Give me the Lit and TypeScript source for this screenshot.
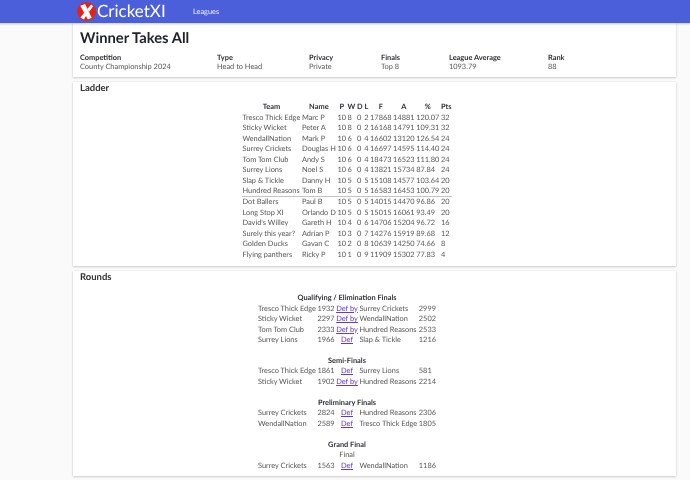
import { LitElement, html, css } from "lit";
import { customElement } from "lit/decorators.js";

const ladder = [
  ["Tresco Thick Edge","Marc P","10","8","0","2","17868","14881","120.07","32"],
  ["Sticky Wicket","Peter A","10","8","0","2","16168","14791","109.31","32"],
  ["WendallNation","Mark P","10","6","0","4","16602","13120","126.54","24"],
  ["Surrey Crickets","Douglas H","10","6","0","4","16697","14595","114.40","24"],
  ["Tom Tom Club","Andy S","10","6","0","4","18473","16523","111.80","24"],
  ["Surrey Lions","Noel S","10","6","0","4","13821","15734","87.84","24"],
  ["Slap & Tickle","Danny H","10","5","0","5","15108","14577","103.64","20"],
  ["Hundred Reasons","Tom B","10","5","0","5","16583","16453","100.79","20"],
  ["Dot Ballers","Paul B","10","5","0","5","14015","14470","96.86","20"],
  ["Long Stop XI","Orlando D","10","5","0","5","15015","16061","93.49","20"],
  ["David's Willey","Gareth H","10","4","0","6","14706","15204","96.72","16"],
  ["Surely this year?","Adrian P","10","3","0","7","14276","15919","89.68","12"],
  ["Golden Ducks","Gavan C","10","2","0","8","10639","14250","74.66","8"],
  ["Flying panthers","Ricky P","10","1","0","9","11909","15302","77.83","4"],
];
const heads = ["Team","Name","P","W","D","L","F","A","%","Pts"];
type G = [string, string, string, string, string];
const rounds: { title: string; sub?: string; games: G[] }[] = [
  { title: "Qualifying / Elimination Finals", games: [
    ["Tresco Thick Edge","1932","Def by","Surrey Crickets","2999"],
    ["Sticky Wicket","2297","Def by","WendallNation","2502"],
    ["Tom Tom Club","2333","Def by","Hundred Reasons","2533"],
    ["Surrey Lions","1966","Def","Slap & Tickle","1216"],
  ]},
  { title: "Semi-Finals", games: [
    ["Tresco Thick Edge","1861","Def","Surrey Lions","581"],
    ["Sticky Wicket","1902","Def by","Hundred Reasons","2214"],
  ]},
  { title: "Preliminary Finals", games: [
    ["Surrey Crickets","2824","Def","Hundred Reasons","2306"],
    ["WendallNation","2589","Def","Tresco Thick Edge","1805"],
  ]},
  { title: "Grand Final", sub: "Final", games: [
    ["Surrey Crickets","1563","Def","WendallNation","1186"],
  ]},
];
const meta = [
  ["Competition","County Championship 2024"],
  ["Type","Head to Head"],
  ["Privacy","Private"],
  ["Finals","Top 8"],
  ["League Average","1093.79"],
  ["Rank","88"],
];

@customElement("app-root")
export class AppRoot extends LitElement {
  static styles = css`
    :host { display: block; height: 480px; overflow: hidden; background: #fafafa; font-family: Lato, "Liberation Sans", sans-serif; font-size: 7.4px; line-height: 10.54px; color: #555; text-rendering: geometricPrecision; }
    .page { height: 480px; filter: blur(0.3px); margin: 0 -2px; padding: 0 2px; }
    .nav { height: 23px; margin: 0 -2px; background: #4c5fdb; display: flex; align-items: center; padding-left: 79px; color: #fff; box-shadow: 0 1px 2px rgba(34,36,38,.25); position: relative; }
    .logo { display: flex; align-items: center; gap: 1px; width: 116px; font-size: 17px; color: #fff; }
    .logo svg { width: 19px; height: 19px; flex: none; }
    .nav a { font-size: 7.4px; color: #eef0fc; padding-top: 1px; }
    .card { background: #fff; width: 603px; margin: 0 0 5px 73px; box-shadow: 0 1px 2px rgba(34,36,38,.18), 0 0 1px rgba(34,36,38,.2); box-sizing: border-box; padding: 0 7px; }
    .inner { width: 534px; }
    .head { height: 53.5px; padding-top: 5.5px; }
    h1 { margin: 0; font-size: 14.75px; line-height: 18px; font-weight: 700; color: #1f2229; }
    h2 { margin: 0; font-size: 9.5px; line-height: 12px; font-weight: 700; color: #333; }
    .meta { display: grid; grid-template-columns: 137px 92px 72px 68px 99px 1fr; margin-top: 6.5px; line-height: 9.4px; }
    .meta b { display: block; font-weight: 700; color: #2c2f36; }
    .ladder { height: 184.5px; padding-top: 1.2px; }
    table { border-collapse: collapse; margin: 0 auto; }
    td, th { padding: 0 0.8px; white-space: nowrap; text-align: left; font-weight: 400; }
    th { font-weight: 700; color: #2c2f36; text-align: center; }
    .lt { margin-top: 7.4px; }
    .cut td { box-shadow: inset 0 -1px #c4c4c4; }
    .rounds { height: 205px; padding-top: 1px; overflow: hidden; }
    .rt { margin-top: 9px; }
    .rt th { text-align: center; }
    .rt td.sub { text-align: center; }
    .gap td { height: 10.2px; }
    a.link { color: #6435d9; text-decoration: underline; }
    td.lc { text-align: center; }
  `;
  render() {
    return html`
      <div class="page">
      <div class="nav">
        <div class="logo">
          <svg viewBox="0 0 20 20"><circle cx="10" cy="10" r="10" fill="#e2231a"/><path d="M3.5 4 L8.5 2 L15.5 16.5 L11.5 18.5 Z" fill="#fff"/><path d="M15 2.5 L17 4.5 L12.6 10.6 L11 7.2 Z M8 10.5 L9.8 14.2 L7.4 18.4 L3.6 16.2 Z" fill="#fff"/></svg>
          <span>CricketXI</span>
        </div>
        <a>Leagues</a>
      </div>
      <div class="card head">
        <div class="inner">
          <h1>Winner Takes All</h1>
          <div class="meta">
            ${meta.map(m => html`<div><b>${m[0]}</b>${m[1]}</div>`)}
          </div>
        </div>
      </div>
      <div class="card ladder">
        <div class="inner">
          <h2>Ladder</h2>
          <table class="lt">
            <tr>${heads.map(h => html`<th>${h}</th>`)}</tr>
            ${ladder.map((r, i) => html`<tr class=${i === 7 ? "cut" : ""}>${r.map(c => html`<td>${c}</td>`)}</tr>`)}
          </table>
        </div>
      </div>
      <div class="card rounds">
        <div class="inner">
          <h2>Rounds</h2>
          <table class="rt">
            ${rounds.map((r, i) => html`
              ${i ? html`<tr class="gap"><td colspan="5"></td></tr>` : ""}
              <tr><th colspan="5">${r.title}</th></tr>
              ${r.sub ? html`<tr><td class="sub" colspan="5">${r.sub}</td></tr>` : ""}
              ${r.games.map(g => html`<tr><td>${g[0]}</td><td>${g[1]}</td><td class="lc"><a class="link">${g[2]}</a></td><td>${g[3]}</td><td>${g[4]}</td></tr>`)}
            `)}
          </table>
        </div>
      </div>
      </div>
    `;
  }
}
